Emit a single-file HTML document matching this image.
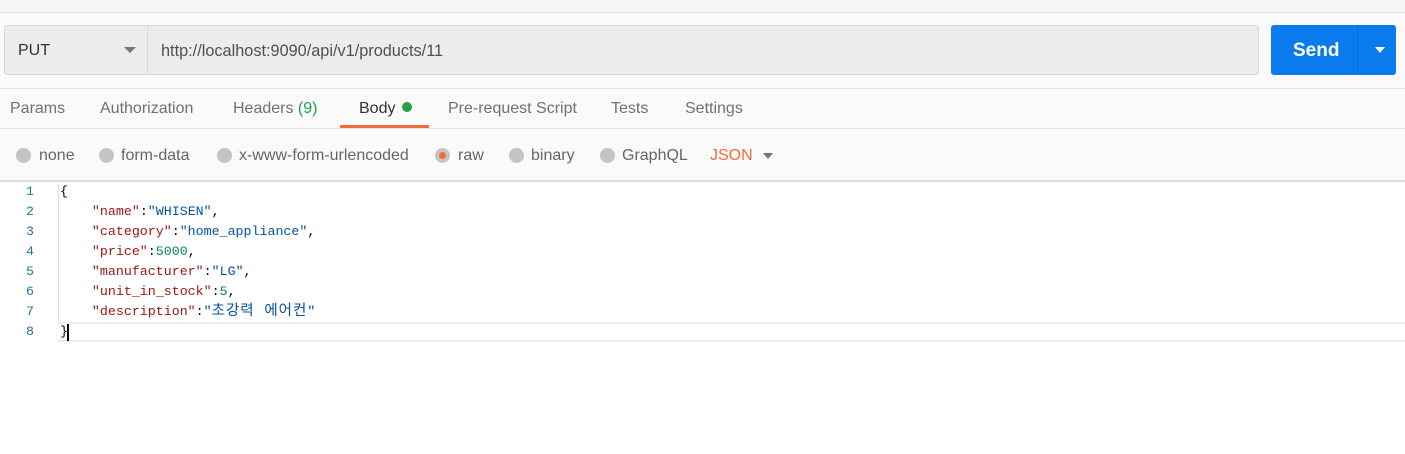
<!DOCTYPE html>
<html><head><meta charset="utf-8"><style>
*{margin:0;padding:0;box-sizing:border-box}
body{width:1405px;height:454px;background:#fafafa;font-family:"Liberation Sans","Noto Sans CJK KR",sans-serif;position:relative;overflow:hidden}
.top{position:absolute;left:0;top:0;width:1405px;height:13px;background:#f5f5f5;border-bottom:1px solid #e4e4e4}
.bar{position:absolute;left:4px;top:25px;width:1255px;height:50px;background:#ececec;border:1px solid #d9d9d9;border-radius:3px}
.meth{position:absolute;left:0;top:0;width:143px;height:48px;border-right:1px solid #d9d9d9;font-size:16px;color:#333;line-height:50px;padding-left:13px}
.caret{position:absolute;width:0;height:0;border-left:6px solid transparent;border-right:6px solid transparent;border-top:6px solid #777}
.url{position:absolute;left:156px;top:0;line-height:50px;font-size:16.3px;color:#505050}
.send{position:absolute;left:1271px;top:25px;width:125px;height:50px;background:#097bed;border-radius:3px;color:#fff;font-weight:bold;font-size:19px}
.send span{position:absolute;left:22px;top:15px}
.send i{position:absolute;left:86px;top:0;width:1px;height:50px;background:#0a6cd0}
.tabsline{position:absolute;left:0;top:88px;width:1405px;height:1px;background:#e6e6e6}
.tabs{position:absolute;left:0;top:128px;width:1405px;height:1px;background:#e6e6e6}
.tab{position:absolute;top:100px;font-size:16px;color:#707070}
.ul{position:absolute;left:340px;top:125px;width:89px;height:3px;background:#f26b3a}
.opt{position:absolute;top:147px;font-size:16px;color:#666}
.rad{position:absolute;top:148px;width:15px;height:15px;border-radius:50%;background:#c4c4c4}
.editor{position:absolute;left:0;top:180px;width:1405px;height:274px;background:#fff;border-top:2px solid #dedede}
.ln{position:absolute;left:0;width:34px;text-align:right;color:#237893;font-family:"Liberation Mono",monospace;font-size:13.3px;line-height:20px}
.code{position:absolute;left:60px;font-family:"Liberation Mono","Noto Sans CJK KR",monospace;font-size:13.3px;line-height:20px;height:20px;white-space:pre;color:#000}
.k{color:#a31515}.s{color:#0451a5}.n{color:#098658}
.kr{font-size:14.5px;letter-spacing:1px}
</style></head><body>
<div class="top"></div>
<div class="bar"><div class="meth">PUT</div><div class="caret" style="left:119px;top:21px"></div><div class="url">http://localhost:9090/api/v1/products/11</div></div>
<div class="send"><span>Send</span><i></i><div class="caret" style="left:104px;top:22px;border-top-color:#fff;border-left-width:5px;border-right-width:5px;border-top-width:6px"></div></div>
<div class="tabsline"></div>
<div class="tab" style="left:10px">Params</div>
<div class="tab" style="left:100px">Authorization</div>
<div class="tab" style="left:233px">Headers <span style="color:#26a046">(9)</span></div>
<div class="tab" style="left:359px;color:#333">Body <span style="display:inline-block;width:10px;height:10px;border-radius:50%;background:#26a046;vertical-align:1px;margin-left:2px"></span></div>
<div class="tab" style="left:448px">Pre-request Script</div>
<div class="tab" style="left:611px">Tests</div>
<div class="tab" style="left:685px">Settings</div>
<div class="tabs"></div><div class="ul"></div>
<div class="rad" style="left:16px"></div><div class="opt" style="left:39px">none</div>
<div class="rad" style="left:99px"></div><div class="opt" style="left:121px">form-data</div>
<div class="rad" style="left:217px"></div><div class="opt" style="left:239px">x-www-form-urlencoded</div>
<div class="rad" style="left:435px;background:#c4c4c4"><div style="position:absolute;left:4px;top:4px;width:7px;height:7px;border-radius:50%;background:#f26b3a"></div></div><div class="opt" style="left:458px">raw</div>
<div class="rad" style="left:509px"></div><div class="opt" style="left:531px">binary</div>
<div class="rad" style="left:600px"></div><div class="opt" style="left:622px">GraphQL</div>
<div class="opt" style="left:710px;color:#f26b3a">JSON</div><div class="caret" style="left:763px;top:153px;border-left-width:5px;border-right-width:5px"></div>
<div class="editor"></div>
<div style="position:absolute;left:58px;top:322px;width:1347px;height:20px;border-top:2px solid #eee;border-bottom:2px solid #eee"></div>
<div style="position:absolute;left:58px;top:184px;width:1px;height:138px;background:#ddd"></div>
<div class="ln" style="top:182px">1</div><div class="ln" style="top:202px">2</div><div class="ln" style="top:222px">3</div><div class="ln" style="top:242px">4</div><div class="ln" style="top:262px">5</div><div class="ln" style="top:282px">6</div><div class="ln" style="top:302px">7</div><div class="ln" style="top:322px">8</div>
<div class="code" style="top:182px">{</div>
<div class="code" style="top:202px">    <span class="k">"name"</span>:<span class="s">"WHISEN"</span>,</div>
<div class="code" style="top:222px">    <span class="k">"category"</span>:<span class="s">"home_appliance"</span>,</div>
<div class="code" style="top:242px">    <span class="k">"price"</span>:<span class="n">5000</span>,</div>
<div class="code" style="top:262px">    <span class="k">"manufacturer"</span>:<span class="s">"LG"</span>,</div>
<div class="code" style="top:282px">    <span class="k">"unit_in_stock"</span>:<span class="n">5</span>,</div>
<div class="code" style="top:302px">    <span class="k">"description"</span>:<span class="s">"<span class="kr">초강력 에어컨</span>"</span></div>
<div class="code" style="top:322px">}</div>
<div style="position:absolute;left:67px;top:324px;width:2px;height:17px;background:#000"></div>
</body></html>
